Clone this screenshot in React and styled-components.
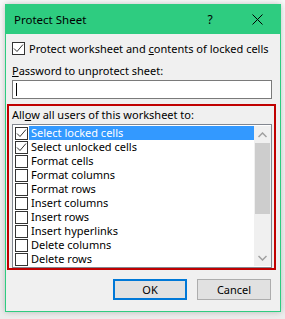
import React from "react";
import styled, { createGlobalStyle } from "styled-components";

const Global = createGlobalStyle`
  html, body { margin: 0; padding: 0; background: #f4f4f4; }
  body { font-family: "Noto Sans", "Open Sans", sans-serif; font-size: 11px; color: #000; }
`;

const Page = styled.div`
  width: 285px;
  height: 319px;
  padding: 4px 0 0 5px;
  box-sizing: border-box;
  background: linear-gradient(#f8f8f8, #ececec);
`;

const Window = styled.div`
  width: 276px;
  height: 308px;
  box-sizing: border-box;
  border: 1px solid #2ecc80;
  background: #f0f0f0;
  box-shadow: 0 0 6px rgba(0, 0, 0, 0.22);
  display: flex;
  flex-direction: column;
`;

const TitleBar = styled.div`
  height: 29px;
  background: #2ecc80;
  display: flex;
  align-items: center;
  padding: 0 0 0 8px;
  flex-shrink: 0;
`;

const Title = styled.div`
  flex: 1;
  font-size: 11.5px;
`;

const TitleButton = styled.div`
  width: ${(p) => p.$w}px;
  margin-right: ${(p) => p.$mr || 0}px;
  height: 29px;
  display: flex;
  align-items: center;
  justify-content: center;
  font-size: 12px;
`;

const Body = styled.div`
  flex: 1;
  display: flex;
  flex-direction: column;
  padding: 8px 8px 0 6px;
`;

const CheckRow = styled.label`
  display: flex;
  align-items: center;
  gap: 4px;
  height: 13px;
  white-space: nowrap;
`;

const Box = styled.span`
  width: 13px;
  height: 13px;
  box-sizing: border-box;
  border: 1px solid #333;
  background: #fff;
  display: flex;
  align-items: center;
  justify-content: center;
  flex-shrink: 0;
`;

const Label = styled.div`
  margin-top: ${(p) => p.$mt}px;
  height: 14px;
  line-height: 14px;
  white-space: nowrap;
`;

const Input = styled.div`
  margin-top: 2px;
  height: 19px;
  box-sizing: border-box;
  border: 1px solid #7a7a7a;
  background: #fff;
  display: flex;
  align-items: center;
  padding-left: 3px;
`;

const Caret = styled.span`
  width: 1px;
  height: 13px;
  background: #000;
`;

const Group = styled.div`
  margin: 5px 0 0 -5px;
  width: 269px;
  height: 166px;
  box-sizing: border-box;
  border: 2px solid #c00000;
  padding: 2px 2px 0 3px;
  display: flex;
  flex-direction: column;
`;

const ListBox = styled.div`
  margin-top: 2px;
  height: 144px;
  box-sizing: border-box;
  border: 1px solid #828790;
  background: #fff;
  padding: 1px 0 1px 2px;
  display: flex;
`;

const Items = styled.div`
  flex: 1;
  display: flex;
  flex-direction: column;
`;

const Item = styled.div`
  height: 14px;
  display: flex;
  align-items: center;
`;

const ItemText = styled.span`
  margin-left: 1px;
  flex: 1;
  height: 14px;
  line-height: 14px;
  padding-left: 2px;
  background: ${(p) => (p.$sel ? "#3399ff" : "transparent")};
  color: ${(p) => (p.$sel ? "#fff" : "#000")};
`;

const ScrollBar = styled.div`
  width: 17px;
  background: #f0f0f0;
  display: flex;
  flex-direction: column;
  align-items: center;
`;

const Arrow = styled.div`
  height: 17px;
  width: 17px;
  display: flex;
  align-items: center;
  justify-content: center;
  flex-shrink: 0;
`;

const Thumb = styled.div`
  width: 15px;
  height: 71px;
  background: #cdcdcd;
`;

const Spacer = styled.div`
  flex: 1;
`;

const Buttons = styled.div`
  display: flex;
  justify-content: flex-end;
  gap: 10px;
  margin-top: 9px;
  padding-right: 1px;
`;

const Button = styled.div`
  width: 74px;
  height: 21px;
  box-sizing: border-box;
  border: ${(p) => (p.$primary ? "2px solid #0078d7" : "1px solid #adadad")};
  background: #e1e1e1;
  display: flex;
  align-items: center;
  justify-content: center;
`;

const Check = () => (
  <svg width="11" height="11" viewBox="0 0 11 11">
    <polyline points="1,5.5 4,8.5 10,1.5" fill="none" stroke="#333" strokeWidth="1" />
  </svg>
);

const items = [
  ["Select locked cells", true],
  ["Select unlocked cells", true],
  ["Format cells", false],
  ["Format columns", false],
  ["Format rows", false],
  ["Insert columns", false],
  ["Insert rows", false],
  ["Insert hyperlinks", false],
  ["Delete columns", false],
  ["Delete rows", false],
];

export default function App() {
  return (
    <>
      <Global />
      <Page>
        <Window>
          <TitleBar>
            <Title>Protect Sheet</Title>
            <TitleButton $w={30} $mr={9}>?</TitleButton>
            <TitleButton $w={46}>
              <svg width="11" height="11" viewBox="0 0 11 11">
                <path d="M0.5 0.5 L10.5 10.5 M10.5 0.5 L0.5 10.5" stroke="#000" strokeWidth="1" />
              </svg>
            </TitleButton>
          </TitleBar>
          <Body>
            <CheckRow>
              <Box><Check /></Box>
              <span>Protect worksheet and <u>c</u>ontents of locked cells</span>
            </CheckRow>
            <Label $mt={9}><u>P</u>assword to unprotect sheet:</Label>
            <Input><Caret /></Input>
            <Group>
              <Label $mt={0}>All<u>o</u>w all users of this worksheet to:</Label>
              <ListBox>
                <Items>
                  {items.map(([t, c], i) => (
                    <Item key={t}>
                      <Box>{c && <Check />}</Box>
                      <ItemText $sel={i === 0}>{t}</ItemText>
                    </Item>
                  ))}
                </Items>
                <ScrollBar>
                  <Arrow>
                    <svg width="9" height="6" viewBox="0 0 9 6">
                      <polyline points="0.5,5 4.5,1 8.5,5" fill="none" stroke="#a0a0a0" strokeWidth="1.5" />
                    </svg>
                  </Arrow>
                  <Thumb />
                  <Spacer />
                  <Arrow>
                    <svg width="9" height="6" viewBox="0 0 9 6">
                      <polyline points="0.5,1 4.5,5 8.5,1" fill="none" stroke="#a0a0a0" strokeWidth="1.5" />
                    </svg>
                  </Arrow>
                </ScrollBar>
              </ListBox>
            </Group>
            <Buttons>
              <Button $primary>OK</Button>
              <Button>Cancel</Button>
            </Buttons>
          </Body>
        </Window>
      </Page>
    </>
  );
}
